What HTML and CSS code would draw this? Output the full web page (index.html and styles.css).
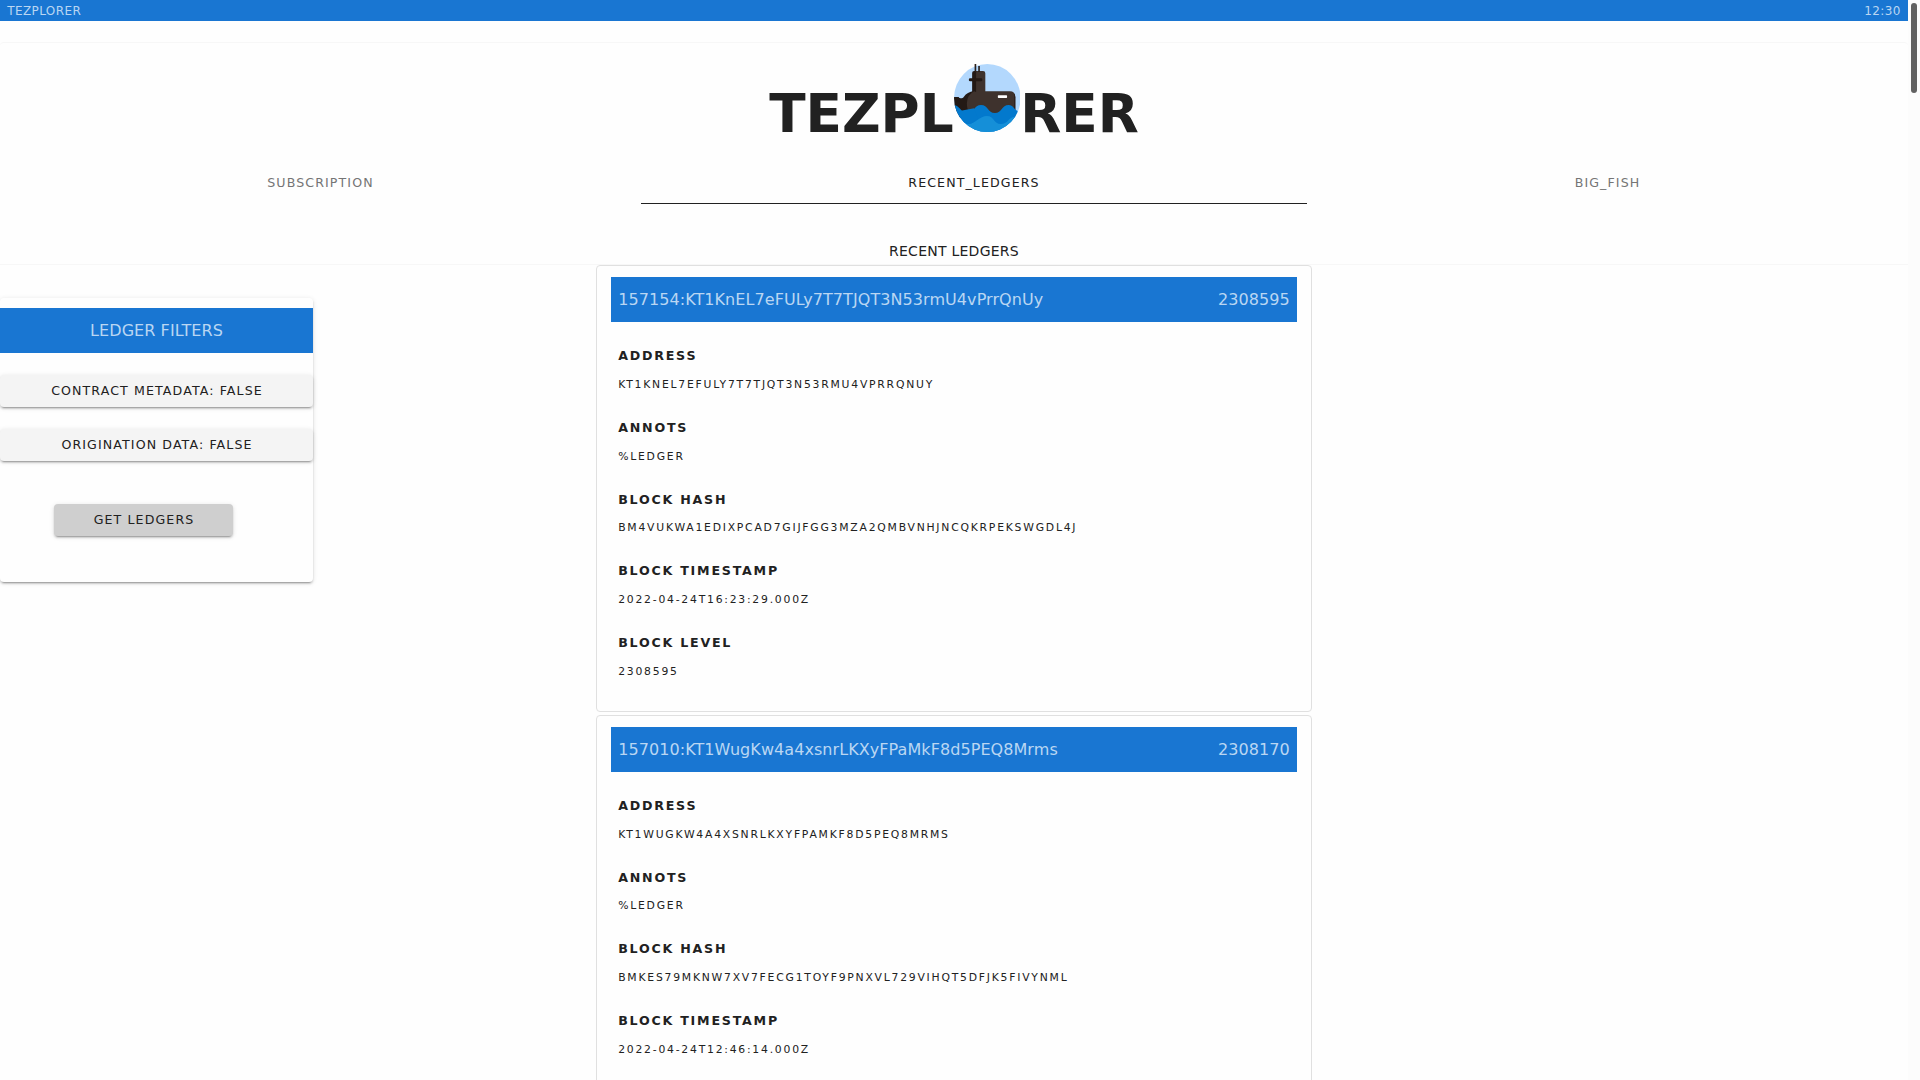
FILE: index.html
```html
<!DOCTYPE html>
<html lang="en">
<head>
<meta charset="utf-8">
<title>Tezplorer</title>
<link rel="stylesheet" href="styles.css">
</head>
<body>
<div class="app">
  <main class="page">
    <header class="system-bar"><span>TEZPLORER</span><span>12:30</span></header>
    <section class="hero">
      <h1 class="brand"><span>TEZPL</span><svg class="logo" viewBox="39 42 202 204" preserveAspectRatio="none">
        <defs><clipPath id="disc"><ellipse cx="140" cy="144" rx="101" ry="102"/></clipPath></defs>
        <ellipse cx="140" cy="144" rx="101" ry="102" fill="#b3d8fd"/>
        <g clip-path="url(#disc)">
          <path d="M39 141h14q2 4 6 4h4q4-1 6-5 10-14 30-17l30 30-30 50H39z" fill="#231915"/>
          <path d="M94 126V69q0-6 6-6h12v63z" fill="#231915"/>
          <path d="M106 126V63h21q7 0 7 7v54h75q14 0 16 16v60H90q-12-20-12-40 0-25 22-36z" fill="#3e322d"/>
          <path d="M221 130q4 5 4 12v50h-4z" fill="#2c211d"/>
          <rect x="84" y="85" width="41" height="9" rx="4" fill="#231915"/>
          <path d="M39 166c18 0 20 23 40 23 22 0 20-24 42-24s20 24 42 24 20-24 42-24c14 0 16 14 27 18v67H39z" fill="#0379cd"/>
          <path d="M39 200c20 0 20 22 42 22 22 0 36-24 58-24s20 24 42 24 22-20 42-22v46H39z" fill="#158fd8"/>
          <path d="M39 186c18 0 20 36 42 36 16 0 22-10 30-18L100 175z" fill="#0379cd"/>
        </g>
        <path d="M104 42v24M115 48v18" stroke="#2b201c" stroke-width="5" fill="none"/>
        <rect x="172" y="136" width="28" height="8" rx="2" fill="#fff"/>
      </svg><span>RER</span></h1>
      <nav class="tabs">
        <a class="tab">SUBSCRIPTION</a>
        <a class="tab tab-active">RECENT_LEDGERS</a>
        <a class="tab">BIG_FISH</a>
      </nav>
      <h2 class="section-title">RECENT LEDGERS</h2>
    </section>
    <div class="content">
      <aside class="filters">
        <div class="filters-title">LEDGER FILTERS</div>
        <button class="btn">CONTRACT METADATA: FALSE</button>
        <button class="btn">ORIGINATION DATA: FALSE</button>
        <button class="btn btn-submit">GET LEDGERS</button>
      </aside>
      <div class="ledgers">
        <article class="ledger">
          <div class="ledger-head"><span>157154:KT1KnEL7eFULy7T7TJQT3N53rmU4vPrrQnUy</span><span>2308595</span></div>
          <dl class="fields">
            <div class="field"><dt>ADDRESS</dt><dd>KT1KNEL7EFULY7T7TJQT3N53RMU4VPRRQNUY</dd></div>
            <div class="field"><dt>ANNOTS</dt><dd>%LEDGER</dd></div>
            <div class="field"><dt>BLOCK HASH</dt><dd>BM4VUKWA1EDIXPCAD7GIJFGG3MZA2QMBVNHJNCQKRPEKSWGDL4J</dd></div>
            <div class="field"><dt>BLOCK TIMESTAMP</dt><dd>2022-04-24T16:23:29.000Z</dd></div>
            <div class="field"><dt>BLOCK LEVEL</dt><dd>2308595</dd></div>
          </dl>
        </article>
        <article class="ledger">
          <div class="ledger-head"><span>157010:KT1WugKw4a4xsnrLKXyFPaMkF8d5PEQ8Mrms</span><span>2308170</span></div>
          <dl class="fields">
            <div class="field"><dt>ADDRESS</dt><dd>KT1WUGKW4A4XSNRLKXYFPAMKF8D5PEQ8MRMS</dd></div>
            <div class="field"><dt>ANNOTS</dt><dd>%LEDGER</dd></div>
            <div class="field"><dt>BLOCK HASH</dt><dd>BMKES79MKNW7XV7FECG1TOYF9PNXVL729VIHQT5DFJK5FIVYNML</dd></div>
            <div class="field"><dt>BLOCK TIMESTAMP</dt><dd>2022-04-24T12:46:14.000Z</dd></div>
          </dl>
        </article>
      </div>
    </div>
  </main>
  <div class="scrollbar"><div class="scrollbar-thumb"></div></div>
</div>
</body>
</html>
```
FILE: styles.css
```css
* { box-sizing: border-box; margin: 0; padding: 0; }

body {
  font-family: "DejaVu Sans", sans-serif;
  color: #212121;
  background: #fff;
  overflow: hidden;
}

.app { display: flex; height: 1080px; overflow: hidden; }
.page { width: 1908px; background: #fefefe; }

.scrollbar { width: 12px; padding: 3px; background: #fcfcfc; }
.scrollbar-thumb { width: 6px; height: 90px; border-radius: 3px; background: #616161; }

.system-bar {
  display: flex;
  justify-content: space-between;
  height: 21px;
  padding: 1px 7.2px 0;
  font-size: 12px;
  line-height: 21px;
  letter-spacing: 0.4px;
  color: #bad6f2;
  background: #1976d2;
}

.hero {
  height: 223px;
  margin-top: 21px;
  border: solid #f7f7f7;
  border-width: 1px 0;
  border-radius: 4px 4px 0 0;
}

.brand {
  display: flex;
  justify-content: center;
  height: 112px;
  padding-top: 21px;
  font-size: 53.33px;
  line-height: 100px;
}
.brand .logo { width: 66.6px; height: 68px; }

.tabs { display: grid; grid-template-columns: 641px 666px 601px; height: 49px; }
.tab {
  padding-top: 18px;
  font-size: 12.6px;
  line-height: 20px;
  letter-spacing: 0.0875em;
  text-align: center;
  color: #757575;
}
.tab-active { color: #212121; border-bottom: 1px solid #212121; }

.section-title {
  padding-top: 37px;
  font-size: 14px;
  font-weight: 400;
  line-height: 20px;
  letter-spacing: 0.25px;
  text-align: center;
}

.content { display: grid; grid-template-columns: 313px 716px; column-gap: 283px; align-items: start; }

.filters {
  height: 284px;
  margin-top: 33px;
  padding-top: 10px;
  border-radius: 4px;
  box-shadow: 0 3px 1px -2px rgba(0,0,0,.2), 0 2px 2px rgba(0,0,0,.14), 0 1px 5px rgba(0,0,0,.12);
}
.filters-title {
  height: 45px;
  margin-bottom: 22px;
  font-size: 16px;
  line-height: 45px;
  letter-spacing: 0.07px;
  text-align: center;
  color: #bad6f2;
  background: #1976d2;
}

.btn {
  display: block;
  width: 100%;
  height: 32.4px;
  margin-bottom: 21.6px;
  padding-left: 1px;
  border: 0;
  border-radius: 4px;
  font: 12.6px/32px "DejaVu Sans", sans-serif;
  letter-spacing: 0.0875em;
  color: #212121;
  background: #f4f4f4;
  box-shadow: 0 3px 1px -2px rgba(0,0,0,.2), 0 2px 2px rgba(0,0,0,.14), 0 1px 5px rgba(0,0,0,.12);
}
.btn-submit { width: 179px; margin: 42.4px 0 0 54px; background: #cfcfcf; }

.ledger {
  height: 447px;
  margin-bottom: 2.75px;
  padding: 11px 14px 0;
  border: 1px solid #e0e0e0;
  border-radius: 4px;
  background: #fefefe;
}
.ledger-head {
  display: flex;
  justify-content: space-between;
  height: 45px;
  padding: 0 7.2px;
  font-size: 16px;
  line-height: 45px;
  letter-spacing: 0.07px;
  color: #bad6f2;
  background: #1976d2;
}

.fields { padding: 20.1px 7.2px 0; letter-spacing: 1.77px; }
.field { height: 71.75px; }
.field dt { height: 28.9px; font-size: 12.64px; font-weight: 700; line-height: 28px; }
.field dd { font-size: 10.8px; line-height: 28px; }
```
